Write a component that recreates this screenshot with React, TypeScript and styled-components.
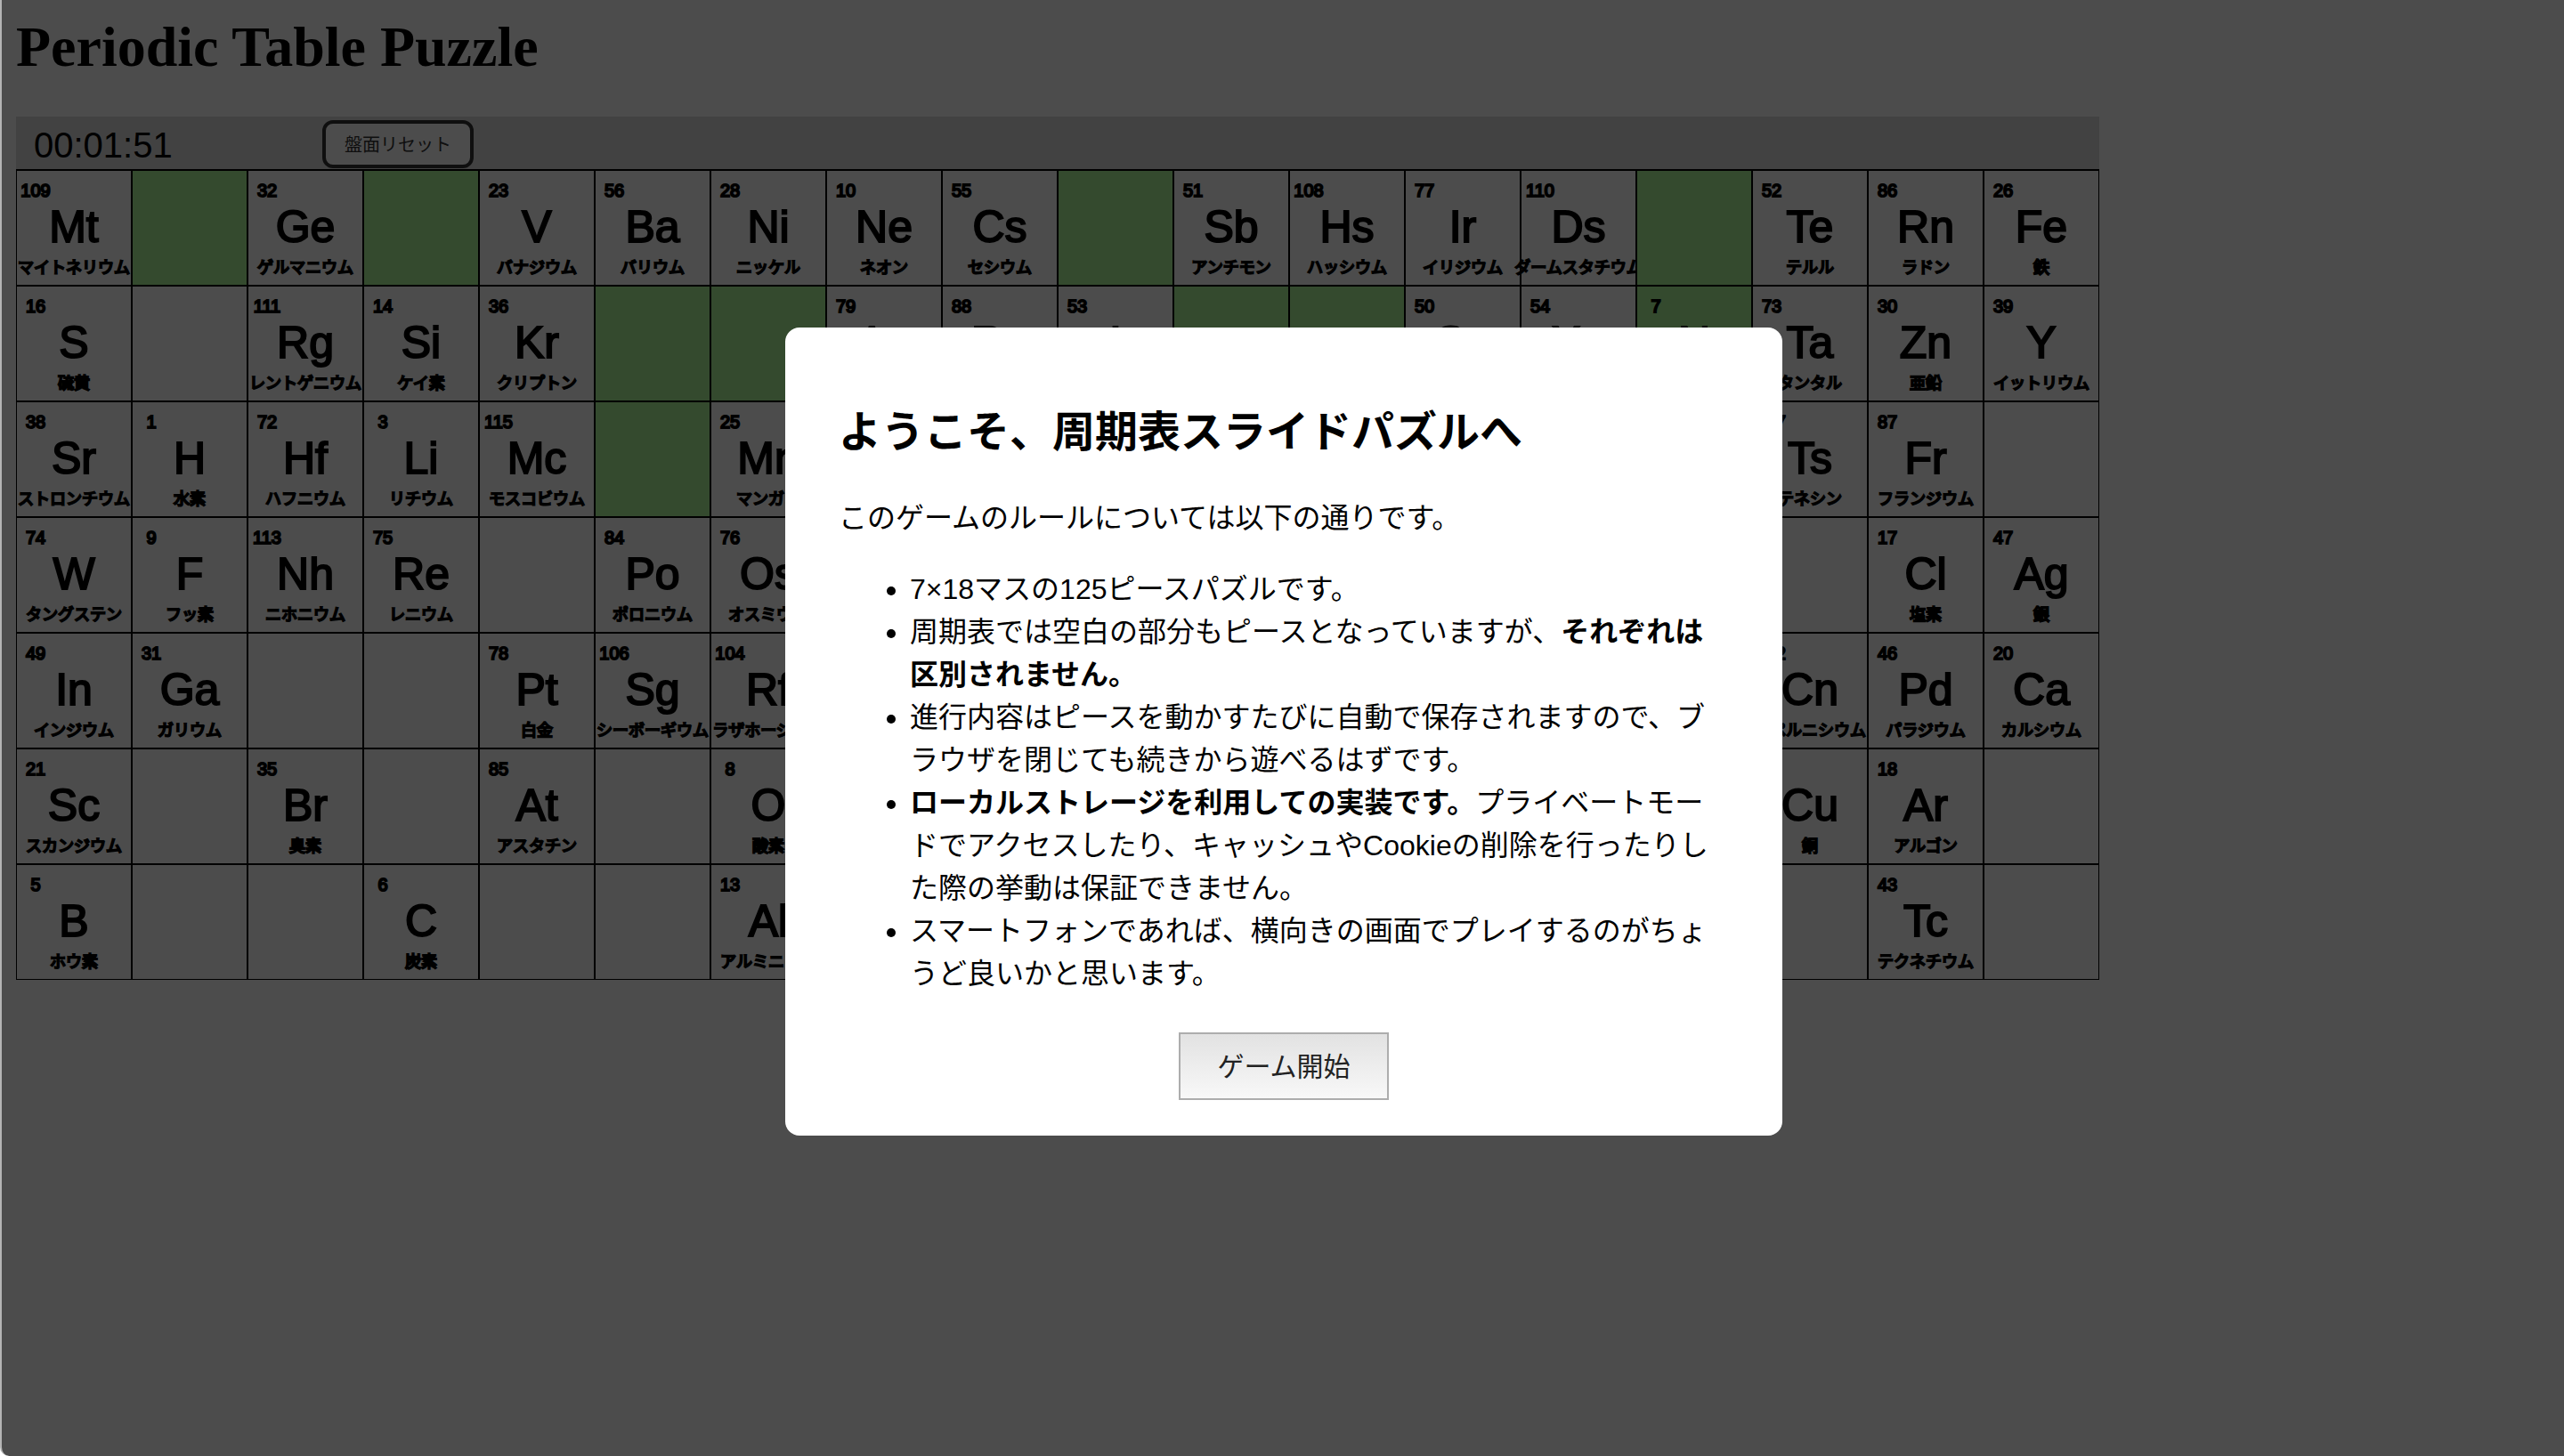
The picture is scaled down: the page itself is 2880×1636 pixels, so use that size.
import React, { useState } from "react";
import styled, { createGlobalStyle } from "styled-components";

const sans = `"Liberation Sans", "Noto Sans CJK JP", sans-serif`;

const GlobalStyle = createGlobalStyle`
  *, *::before, *::after { box-sizing: border-box; }
  html, body { margin: 0; background: #fff; color: #000; }
`;

const Page = styled.main`
  min-height: 100vh;
  padding: 16px 18px;
  font-family: ${sans};
`;

const Title = styled.h1`
  margin: 0 0 42px;
  font: bold 64px/73px "Liberation Serif", serif;
`;

const Game = styled.section`
  width: max-content;
`;

const Toolbar = styled.div`
  display: grid;
  grid-template-columns: 344px max-content;
  align-items: center;
  height: 60px;
  padding-top: 2px;
  background: #dcdcdc;
  border-bottom: 1px solid #000;
`;

const Timer = styled.time`
  padding: 2px 0 0 20px;
  font-size: 40px;
  line-height: 48px;
`;

const ResetButton = styled.button`
  height: 54px;
  padding: 2px 21px 0;
  border: 4px solid #333;
  border-radius: 12px;
  background: #fff;
  color: #333;
  font: 20px/30px ${sans};
`;

const Board = styled.div`
  display: grid;
  grid-template-columns: repeat(18, 130px);
  grid-auto-rows: 130px;
`;

const Cell = styled.div<{ $open?: boolean }>`
  isolation: isolate;
  display: flex;
  flex-direction: column;
  align-items: center;
  padding-top: 11px;
  border: 1px solid #000;
  background: ${(p) => (p.$open ? "#adf79a" : "#fff")};
  white-space: nowrap;
`;

const AtomicNumber = styled.span`
  align-self: flex-start;
  width: 42px;
  text-align: center;
  font-size: 20px;
  line-height: 22px;
  -webkit-text-stroke: 2px #000;
`;

const ElementSymbol = styled.span`
  font-size: 50px;
  line-height: 60px;
  -webkit-text-stroke: 2px #000;
`;

const ElementName = styled.span`
  font-size: 18px;
  line-height: 32px;
  -webkit-text-stroke: 2px #000;
`;

const Overlay = styled.div`
  position: fixed;
  inset: 0;
  display: flex;
  align-items: center;
  justify-content: center;
  padding: 8px 0 0 2px;
  border-left: 2px solid #b4b4b4;
  border-bottom-left-radius: 10px;
  background: rgba(0, 0, 0, 0.7);
`;

const Dialog = styled.div`
  width: 1120px;
  max-width: 90%;
  padding: 40px 60px;
  border-radius: 16px;
  background: #fff;
  font: 32px/48px ${sans};
`;

const DialogTitle = styled.h2`
  margin: 42px 0 36px;
  font-size: 48px;
  line-height: 72px;
`;

const Lead = styled.p`
  margin: 0 0 32px;
`;

const Rules = styled.ul`
  margin: 0 0 42px;
  padding-left: 80px;
`;

const Actions = styled.div`
  display: flex;
  justify-content: center;
`;

const StartButton = styled.button`
  min-width: 236px;
  height: 76px;
  padding-top: 2px;
  border: 2px solid #adadad;
  background: linear-gradient(#e2e2e2, #f8f8f8);
  color: #222;
  font: 30px/44px ${sans};
`;

type Tile = string;

/* "" is a blank tile, "*" a highlighted blank, a leading "*" highlights a tile. */
const board: Tile[][] = [
  ["109 Mt マイトネリウム", "*", "32 Ge ゲルマニウム", "*", "23 V バナジウム", "56 Ba バリウム", "28 Ni ニッケル", "10 Ne ネオン", "55 Cs セシウム", "*", "51 Sb アンチモン", "108 Hs ハッシウム", "77 Ir イリジウム", "110 Ds ダームスタチウム", "*", "52 Te テルル", "86 Rn ラドン", "26 Fe 鉄"],
  ["16 S 硫黄", "", "111 Rg レントゲニウム", "14 Si ケイ素", "36 Kr クリプトン", "*", "*", "79 Au 金", "88 Ra ラジウム", "53 I ヨウ素", "*", "*", "50 Sn スズ", "54 Xe キセノン", "*7 N 窒素", "73 Ta タンタル", "30 Zn 亜鉛", "39 Y イットリウム"],
  ["38 Sr ストロンチウム", "1 H 水素", "72 Hf ハフニウム", "3 Li リチウム", "115 Mc モスコビウム", "*", "25 Mn マンガン", "", "", "", "", "", "", "", "", "117 Ts テネシン", "87 Fr フランジウム", ""],
  ["74 W タングステン", "9 F フッ素", "113 Nh ニホニウム", "75 Re レニウム", "", "84 Po ポロニウム", "76 Os オスミウム", "", "", "", "", "", "", "", "", "", "17 Cl 塩素", "47 Ag 銀"],
  ["49 In インジウム", "31 Ga ガリウム", "", "", "78 Pt 白金", "106 Sg シーボーギウム", "104 Rf ラザホージウム", "", "", "", "", "", "", "", "", "112 Cn コペルニシウム", "46 Pd パラジウム", "20 Ca カルシウム"],
  ["21 Sc スカンジウム", "", "35 Br 臭素", "", "85 At アスタチン", "", "8 O 酸素", "", "", "", "", "", "", "", "", "29 Cu 銅", "18 Ar アルゴン", ""],
  ["5 B ホウ素", "", "", "6 C 炭素", "", "", "13 Al アルミニウム", "", "", "", "", "", "", "", "", "", "43 Tc テクネチウム", ""],
];

function BoardCell({ tile }: { tile: Tile }) {
  const open = tile.startsWith("*");
  const [number, symbol, name] = tile.replace("*", "").split(" ");
  return (
    <Cell $open={open}>
      {symbol && (
        <>
          <AtomicNumber>{number}</AtomicNumber>
          <ElementSymbol>{symbol}</ElementSymbol>
          <ElementName>{name}</ElementName>
        </>
      )}
    </Cell>
  );
}

export default function App() {
  const [started, setStarted] = useState(false);
  return (
    <>
      <GlobalStyle />
      <Page lang="ja">
        <Title>Periodic Table Puzzle</Title>
        <Game>
          <Toolbar>
            <Timer>00:01:51</Timer>
            <ResetButton type="button">盤面リセット</ResetButton>
          </Toolbar>
          <Board>
            {board.flat().map((tile, i) => (
              <BoardCell key={i} tile={tile} />
            ))}
          </Board>
        </Game>
      </Page>
      {!started && (
        <Overlay lang="ja">
          <Dialog role="dialog" aria-modal="true" aria-labelledby="welcome">
            <DialogTitle id="welcome">ようこそ、周期表スライドパズルへ</DialogTitle>
            <Lead>このゲームのルールについては以下の通りです。</Lead>
            <Rules>
              <li>7×18マスの125ピースパズルです。</li>
              <li>周期表では空白の部分もピースとなっていますが、<strong>それぞれは区別されません。</strong></li>
              <li>進行内容はピースを動かすたびに自動で保存されますので、ブラウザを閉じても続きから遊べるはずです。</li>
              <li><strong>ローカルストレージを利用しての実装です。</strong>プライベートモードでアクセスしたり、キャッシュやCookieの削除を行ったりした際の挙動は保証できません。</li>
              <li>スマートフォンであれば、横向きの画面でプレイするのがちょうど良いかと思います。</li>
            </Rules>
            <Actions>
              <StartButton type="button" onClick={() => setStarted(true)}>ゲーム開始</StartButton>
            </Actions>
          </Dialog>
        </Overlay>
      )}
    </>
  );
}
